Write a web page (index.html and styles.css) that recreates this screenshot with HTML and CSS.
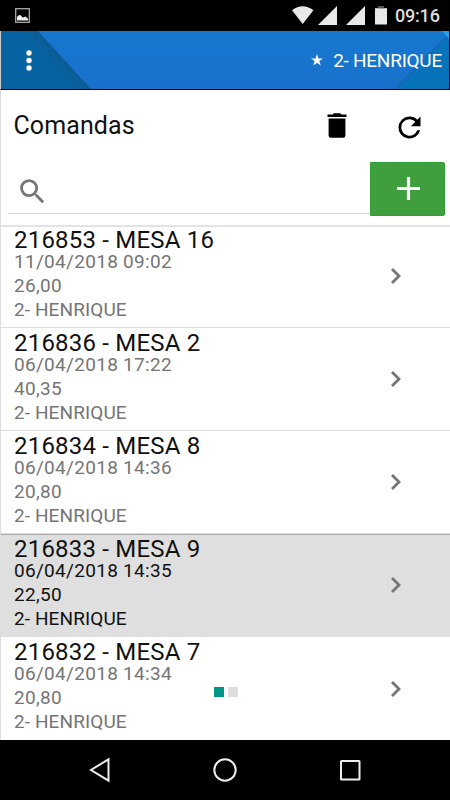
FILE: index.html
```html
<!DOCTYPE html>
<html lang="pt-BR">
<head>
<meta charset="utf-8">
<title>Comandas</title>
<link rel="stylesheet" href="styles.css">
</head>
<body>
<div class="status">
  <svg class="status-picture" width="15" height="15" viewBox="0 0 15 15"><rect x=".7" y=".7" width="13.6" height="13.6" fill="none" stroke="#aaa" stroke-width="1.3"/><path d="M2 12.5V9l1.500-1.500 1.500-.8 2 2 1.500.7 1.500-1 1.500.8 1.500 1.500v1.800z" fill="#eee"/></svg>
  <svg class="status-signals" width="95" height="20" viewBox="0 0 95 20" fill="#e9e9e9"><path d="M0 4.200Q10.700-3.700 21.400 4.200L10.700 18z"/><path d="M45 0v19H26z"/><path d="M73 0v19H54z"/><path d="M83 2.200h12V18.500H83z"/><path d="M86 0h6v2.200h-6z" fill="#555"/></svg>
  <span class="clock">09:16</span>
</div>
<header class="appbar">
  <svg class="appbar-art" width="448" height="58" viewBox="0 0 448 58">
    <defs>
      <linearGradient id="bar" x1="0" y1="0" x2="0" y2="1"><stop offset="0" stop-color="#1678d0"/><stop offset="1" stop-color="#1871ca"/></linearGradient>
      <linearGradient id="shade" gradientUnits="userSpaceOnUse" x1="52" y1="38" x2="64" y2="27"><stop offset="0" stop-color="#0763a2"/><stop offset="1" stop-color="#0c5b93"/></linearGradient>
    </defs>
    <path fill="url(#bar)" d="M0 0h448v58H0z"/>
    <path fill="url(#shade)" d="M0 0h37l53 58H0z"/>
    <path fill="#1468b5" d="M448 2L393 58h4L448 7z"/>
    <path fill="#0773ba" d="M448 4L396 58h52z"/>
    <path fill="#20a4e9" d="M441 0h7v8z"/>
  </svg>
  <svg class="menu" width="6" height="21" viewBox="0 0 6 21" fill="#fff"><circle cx="3" cy="3" r="2.700"/><circle cx="3" cy="10.500" r="2.700"/><circle cx="3" cy="18" r="2.700"/></svg>
  <svg class="star" width="12" height="12" viewBox="0 0 12 12"><path fill="#fff" d="M6 0l1.400 4.400H12L8.300 7.100 9.700 11.500 6 8.800 2.300 11.500 3.700 7.100 0 4.400h4.600z"/></svg>
  <span class="user">2- HENRIQUE</span>
</header>
<main class="content">
  <div class="heading">
    <h1>Comandas</h1>
    <svg class="trash" width="20" height="26" viewBox="0 0 20 26"><path d="M.5 1.500h5L6.800.2h6.400l1.300 1.300h5V4H.5zM1.600 5.500h16.800V22.500q0 2.300-2.300 2.300H3.900q-2.300 0-2.300-2.300z"/></svg>
    <svg class="refresh" width="33" height="33" viewBox="0 0 24 24"><path d="M17.650 6.350A7.960 7.960 0 0 0 12 4a8 8 0 1 0 7.730 10h-2.080A6 6 0 1 1 12 6c1.660 0 3.140.69 4.220 1.780L13 11h7V4z"/></svg>
  </div>
  <div class="search">
    <div class="field"><svg width="33" height="33" viewBox="0 0 24 24"><path fill="#757575" d="M15.500 14h-.79l-.28-.27A6.470 6.470 0 0 0 16 9.500 6.500 6.500 0 1 0 9.500 16c1.610 0 3.090-.59 4.230-1.570l.27.28v.79l5 4.990L20.490 19zm-6 0a4.500 4.500 0 1 1 0-9 4.500 4.500 0 0 1 0 9z"/></svg></div>
    <div class="add"><svg width="24" height="24" viewBox="0 0 24 24"><path d="M12.500 0v23M1 11.500h23" stroke="#fff" stroke-width="3.200"/></svg></div>
  </div>
  <ul class="list">
    <li class="row"><div class="info"><h2>216853 - MESA 16</h2><p class="date">11/04/2018 09:02</p><p>26,00</p><p class="waiter">2- HENRIQUE</p></div><svg class="chevron" width="12" height="18" viewBox="0 0 12 18"><path d="M2 2l7 7-7 7"/></svg></li>
    <li class="row"><div class="info"><h2>216836 - MESA 2</h2><p class="date">06/04/2018 17:22</p><p>40,35</p><p class="waiter">2- HENRIQUE</p></div><svg class="chevron" width="12" height="18" viewBox="0 0 12 18"><path d="M2 2l7 7-7 7"/></svg></li>
    <li class="row"><div class="info"><h2>216834 - MESA 8</h2><p class="date">06/04/2018 14:36</p><p>20,80</p><p class="waiter">2- HENRIQUE</p></div><svg class="chevron" width="12" height="18" viewBox="0 0 12 18"><path d="M2 2l7 7-7 7"/></svg></li>
    <li class="row selected"><div class="info"><h2>216833 - MESA 9</h2><p class="date">06/04/2018 14:35</p><p>22,50</p><p class="waiter">2- HENRIQUE</p></div><svg class="chevron" width="12" height="18" viewBox="0 0 12 18"><path d="M2 2l7 7-7 7"/></svg></li>
    <li class="row"><div class="info"><h2>216832 - MESA 7</h2><p class="date">06/04/2018 14:34</p><p>20,80</p><p class="waiter">2- HENRIQUE</p></div><svg class="chevron" width="12" height="18" viewBox="0 0 12 18"><path d="M2 2l7 7-7 7"/></svg></li>
  </ul>
  <div class="loader"><i class="on"></i><i></i></div>
</main>
<nav class="navbar">
  <svg width="24" height="26" viewBox="0 0 24 26"><path d="M20.500 2.300v21.400L3 13z"/></svg>
  <svg width="26" height="26" viewBox="0 0 26 26"><circle cx="13" cy="13" r="10.700"/></svg>
  <svg width="24" height="26" viewBox="0 0 24 26"><rect x="3" y="4" width="18.500" height="18.500" rx=".5"/></svg>
</nav>
</body>
</html>
```
FILE: styles.css
```css
* { box-sizing: border-box; margin: 0; padding: 0; }
body {
  width: 450px;
  height: 800px;
  display: flex;
  flex-direction: column;
  overflow: hidden;
  background: #fff;
  font-family: Roboto, "Liberation Sans", sans-serif;
  color: #111;
}
svg { display: block; flex: none; }
.status {
  height: 31px;
  flex: none;
  background: #000;
  display: flex;
  align-items: flex-start;
  padding: 0 10px 0 15px;
}
.status-picture { margin-top: 7.5px; }
.status-signals { margin: 6px 0 0 auto; }
.clock {
  margin-left: 8px;
  width: 45px;
  font-size: 18px;
  font-weight: 500;
  letter-spacing: -.2px;
  line-height: 32px;
  color: #ddd;
  white-space: nowrap;
}
.appbar {
  position: relative;
  height: 59px;
  flex: none;
  display: flex;
  align-items: center;
  border-bottom: 1px solid #000;
  border-left: 1px solid #ccc;
  border-right: 1px solid #000;
  padding: 0 7px 0 25px;
  color: #fff;
}
.appbar-art { position: absolute; left: 0; top: 0; }
.menu, .star, .user { position: relative; }
.star { margin-left: auto; }
.user {
  margin-left: 10px;
  font-size: 19px;
  letter-spacing: -.25px;
  line-height: 20px;
  padding-top: 1px;
  white-space: nowrap;
}
.content {
  position: relative;
  height: 650px;
  flex: none;
  border-left: 1px solid #ddd;
}
.heading {
  height: 71px;
  display: flex;
  align-items: center;
  padding: 0 24px 0 12.5px;
}
h1 { font-size: 25px; font-weight: 400; letter-spacing: .1px; line-height: 30px; }
.trash { margin-left: auto; margin-right: 46px; }
.refresh { margin-top: 3px; }
.search {
  height: 64px;
  display: flex;
  align-items: flex-start;
  padding: 1px 5px 0 7px;
}
.field {
  flex: 1;
  height: 52px;
  border-bottom: 1px solid #d4d4d4;
  padding: 13px 0 0 8px;
}
.add {
  width: 75px;
  height: 54px;
  border-radius: 0 2px 2px 0;
  background: #3f9f3f;
  border: 1px solid #2f9e35;
  display: flex;
  align-items: center;
  justify-content: center;
}
.list { list-style: none; }
.row {
  height: 103px;
  display: flex;
  align-items: center;
  border-bottom: 1px solid #ddd;
  padding: 0 48px 0 13px;
  color: #757575;
}
.row:first-child { box-shadow: inset 0 2px #e3e3e3; }
.info { flex: 1; height: 100%; padding-top: 2px; }
h2 {
  font-size: 24px;
  font-weight: 400;
  letter-spacing: .2px;
  line-height: 26px;
  color: #111;
}
p { font-size: 19px; letter-spacing: .3px; line-height: 24px; }
.date { line-height: 17px; margin-bottom: 4px; }
.waiter { letter-spacing: .1px; }
.chevron { fill: none; stroke: #757575; stroke-width: 2.8; }
.row.selected {
  background: #dfdfdf;
  box-shadow: inset 0 1px #aaa;
}
.row.selected p { color: #111; }
.row:last-child { border-bottom: 0; }
.loader {
  position: absolute;
  left: 213px;
  top: 597px;
  display: flex;
  gap: 4px;
}
.loader i { width: 10px; height: 10px; background: #ddd; }
.loader .on { background: #009688; }
.navbar {
  height: 60px;
  flex: none;
  background: #000;
  display: flex;
  align-items: center;
  justify-content: space-between;
  padding: 0 88px;
}
.navbar svg { fill: none; stroke: #eee; stroke-width: 2; }
```
